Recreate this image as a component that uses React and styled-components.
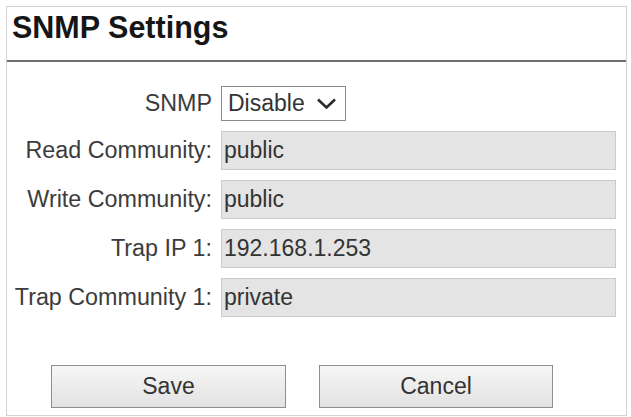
import React from "react";
import styled, { createGlobalStyle } from "styled-components";

const Global = createGlobalStyle`
  html, body { margin: 0; padding: 0; background: #ffffff; }
  body { font-family: "Liberation Sans", Arial, sans-serif; }
  * { box-sizing: border-box; }
`;

const Panel = styled.div`
  margin: 6px 0 0 6px;
  width: 621px;
  height: 410px;
  border: 1px solid #d2d2d2;
  background: #fff;
  display: flex;
  flex-direction: column;
`;

const Header = styled.div`
  height: 55px;
  padding: 3px 0 0 5px;
  border-bottom: 2px solid #6e6e6e;
`;

const Title = styled.h1`
  margin: 0;
  font-size: 30.5px;
  line-height: 34px;
  font-weight: bold;
  color: #161616;
`;

const Form = styled.div`
  display: grid;
  grid-template-columns: 205px 1fr;
  column-gap: 9px;
  row-gap: 10px;
  padding: 24px 10px 0 0;
`;

const Label = styled.label`
  text-align: right;
  align-self: center;
  font-size: 23.3px;
  color: #3c3c3c;
  white-space: nowrap;
`;

const SelectBox = styled.div`
  width: 125px;
  height: 35px;
  border: 1.5px solid #8a8a8a;
  background: #fff;
  display: flex;
  align-items: center;
  justify-content: space-between;
  padding: 0 8px 0 6px;
  font-size: 23px;
  color: #333;
`;

const Field = styled.div`
  height: 39px;
  background: #e4e4e4;
  border: 1.5px solid #cacaca;
  display: flex;
  align-items: center;
  padding-left: 2px;
  font-size: 23px;
  color: #333;
`;

const Buttons = styled.div`
  display: flex;
  gap: 33px;
  padding-left: 44px;
  margin-top: 48px;
`;

const Button = styled.button`
  width: ${(p) => p.$w}px;
  height: 43px;
  border: 1.5px solid #8e8e8e;
  background: linear-gradient(#f6f6f6, #e2e2e2);
  font-family: "Liberation Sans", Arial, sans-serif;
  font-size: 23px;
  color: #333;
  padding: 0;
`;

const Chevron = () => (
  <svg width="21" height="13" viewBox="0 0 21 13">
    <polyline
      points="2,2.5 10.5,10.5 19,2.5"
      fill="none"
      stroke="#2a2a2a"
      strokeWidth="2.6"
    />
  </svg>
);

const rows = [
  ["Read Community:", "public"],
  ["Write Community:", "public"],
  ["Trap IP 1:", "192.168.1.253"],
  ["Trap Community 1:", "private"],
];

export default function App() {
  return (
    <>
      <Global />
      <Panel>
        <Header>
          <Title>SNMP Settings</Title>
        </Header>
        <Form>
          <Label>SNMP</Label>
          <SelectBox>
            <span>Disable</span>
            <Chevron />
          </SelectBox>
          {rows.map(([l, v]) => (
            <React.Fragment key={l}>
              <Label>{l}</Label>
              <Field>{v}</Field>
            </React.Fragment>
          ))}
        </Form>
        <Buttons>
          <Button $w={235}>Save</Button>
          <Button $w={234}>Cancel</Button>
        </Buttons>
      </Panel>
    </>
  );
}
